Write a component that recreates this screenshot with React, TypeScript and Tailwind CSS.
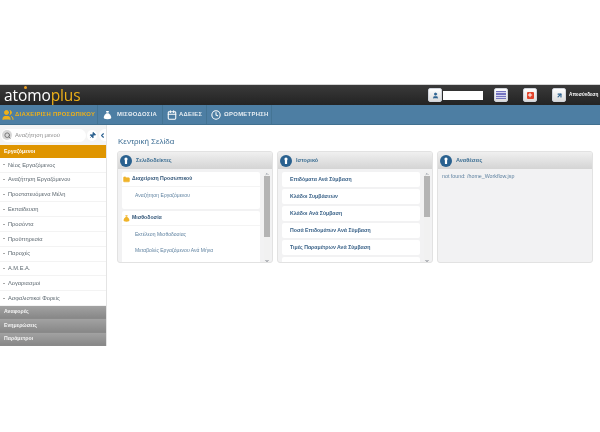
import { Search, Pin, ChevronLeft, ChevronUp, ChevronDown, Calendar, Clock, User, ArrowUpRight, Folder, Users, Plus } from "lucide-react";

const menuItems = [
  "Νέος Εργαζόμενος",
  "Αναζήτηση Εργαζόμενου",
  "Προστατευόμενα Μέλη",
  "Εκπαίδευση",
  "Προσόντα",
  "Προϋπηρεσία",
  "Παροχές",
  "Α.Μ.Ε.Α.",
  "Λογαριασμοί",
  "Ασφαλιστικοί Φορείς",
];

const historyItems = [
  "Επιδόματα Ανά Σύμβαση",
  "Κλάδοι Συμβάσεων",
  "Κλάδοι Ανά Σύμβαση",
  "Ποσά Επιδομάτων Ανά Σύμβαση",
  "Τιμές Παραμέτρων Ανά Σύμβαση",
  "Παράμετροι Ανά Σύμβαση",
];

function MoneyBag({ className }: { className: string }) {
  return (
    <svg viewBox="0 0 12 12" className={className} fill="currentColor">
      <path d="M4 0.5h4L7.2 3H4.8z" />
      <path d="M4.6 3.6h2.8C9.6 5.2 11 7.4 11 9.2c0 1.5-1.2 2.3-5 2.3s-5-.8-5-2.3c0-1.8 1.4-4 3.6-5.6z" />
    </svg>
  );
}

function HeaderButton({ children }: { children: React.ReactNode }) {
  return (
    <div className="flex h-[14px] w-[14px] items-center justify-center rounded-[2px] border border-gray-300 bg-gradient-to-b from-white to-[#dcdcdc]">
      {children}
    </div>
  );
}

function NavItem({ icon, label, active, className }: { icon: React.ReactNode; label: string; active?: boolean; className: string }) {
  return (
    <div className={`flex h-full items-center border-r border-[#447494] ${className}`}>
      {icon}
      <span className={`whitespace-nowrap text-[5.9px] font-bold tracking-[0.3px] ${active ? "text-[#eeb019]" : "text-[#e8eef3]"}`}>{label}</span>
    </div>
  );
}

function Scrollbar({ thumb }: { thumb: string }) {
  return (
    <div className="flex w-[6px] shrink-0 flex-col items-center bg-[#f1f1f1]">
      <ChevronUp className="h-[4px] w-[6px] shrink-0 text-gray-500" strokeWidth={4} />
      <div className={`w-[6px] bg-[#b4b4b4] ${thumb}`} />
      <div className="flex-1" />
      <ChevronDown className="h-[4px] w-[6px] shrink-0 text-gray-800" strokeWidth={4} />
    </div>
  );
}

function Panel({ title, children }: { title: string; children: React.ReactNode }) {
  return (
    <div className="flex h-[112px] w-[156px] flex-col overflow-hidden rounded-[3px] border border-[#e2e2e2] bg-[#f2f2f3]">
      <div className="flex h-[17px] shrink-0 items-center gap-[4px] bg-gradient-to-b from-[#f0f0f0] to-[#d4d4d4] pl-[2px]">
        <svg viewBox="0 0 12 12" className="h-[12px] w-[12px] shrink-0">
          <circle cx="6" cy="6" r="6" fill="#2a618f" />
          <circle cx="6" cy="4" r="1.6" fill="#fff" />
          <rect x="4.9" y="4.5" width="2.2" height="4.5" rx="0.6" fill="#fff" />
        </svg>
        <span className="text-[5.5px] font-bold text-[#3d6f93]">{title}</span>
      </div>
      {children}
    </div>
  );
}

function BookmarkGroup({ icon, title, links, height }: { icon: React.ReactNode; title: string; links: string[]; height: string }) {
  return (
    <div className={`shrink-0 overflow-hidden rounded-[2px] bg-white ${height}`}>
      <div className="flex h-[15px] items-center gap-[2px] border-b border-[#f4f4f4] pl-[1px]">
        {icon}
        <span className="text-[5.2px] font-bold text-[#35587a]">{title}</span>
      </div>
      <div className="flex flex-col pl-[13px]">
        {links.map((link) => (
          <div key={link} className="flex h-[16.5px] items-center text-[5px] text-[#5f82a0]">
            {link}
          </div>
        ))}
      </div>
    </div>
  );
}

export default function App() {
  return (
    <div className="flex h-[432px] w-[600px] flex-col overflow-hidden bg-white font-['Liberation_Sans',Arial,sans-serif] blur-[0.3px]">
      <div className="h-[85px] shrink-0 border-b border-[#d4d4d4]" />

      {/* top bar */}
      <header className="flex h-[20px] shrink-0 items-center justify-between bg-gradient-to-b from-[#3a3a3a] to-[#232323]">
        <div className="pl-[4px] pt-[1px] font-['Open_Sans',sans-serif] text-[15.5px] leading-none tracking-[-0.1px]">
          <span className="text-white">at</span>
          <span className="relative text-white">
            o
            <span className="absolute right-[0px] top-[2px] h-[3px] w-[3px] rounded-full bg-[#f0a020]" />
          </span>
          <span className="text-white">mo</span>
          <span className="text-[#eeb019]">plus</span>
        </div>
        <div className="flex items-center">
          <HeaderButton>
            <User className="h-[7px] w-[7px] fill-[#2d6290] text-[#2d6290]" />
          </HeaderButton>
          <div className="ml-[1px] h-[9px] w-[40px] bg-white" />
          <div className="ml-[11px]">
            <HeaderButton>
              <div className="flex h-[8px] w-[10px] flex-col justify-between bg-[#7474c0] py-[1px]">
                <div className="h-px bg-[#d6d6f0]" />
                <div className="h-px bg-[#d6d6f0]" />
                <div className="h-px bg-[#d6d6f0]" />
              </div>
            </HeaderButton>
          </div>
          <div className="ml-[15px]">
            <HeaderButton>
              <div className="flex h-[7px] w-[7px] items-center justify-center rounded-[1px] bg-[#e2432a]">
                <Plus className="h-[6px] w-[6px] text-white" strokeWidth={4} />
              </div>
            </HeaderButton>
          </div>
          <div className="ml-[15px]">
            <HeaderButton>
              <ArrowUpRight className="h-[7px] w-[7px] text-[#2d6290]" strokeWidth={4} />
            </HeaderButton>
          </div>
          <span className="ml-[3px] mr-[2px] w-[29px] whitespace-nowrap text-[4.7px] font-bold text-white">Αποσύνδεση</span>
        </div>
      </header>

      {/* main nav */}
      <nav className="flex h-[20px] shrink-0 items-center border-b border-[#41708f] bg-[#4d7ea3]">
        <NavItem
          className="w-[98px] pl-[2px]"
          active
          label="ΔΙΑΧΕΙΡΙΣΗ ΠΡΟΣΩΠΙΚΟΥ"
          icon={<Users className="mr-[1px] h-[12px] w-[12px] shrink-0 fill-[#eeb019] text-[#eeb019]" />}
        />
        <NavItem
          className="w-[65px] pl-[5px]"
          label="ΜΙΣΘΟΔΟΣΙΑ"
          icon={<MoneyBag className="mr-[5px] h-[10px] w-[9px] shrink-0 text-white" />}
        />
        <NavItem
          className="w-[44px] pl-[4px]"
          label="ΑΔΕΙΕΣ"
          icon={<Calendar className="mr-[2px] h-[10px] w-[10px] shrink-0 text-white" strokeWidth={2.5} />}
        />
        <NavItem
          className="w-[65px] pl-[4px]"
          label="ΩΡΟΜΕΤΡΗΣΗ"
          icon={<Clock className="mr-[3px] h-[10px] w-[10px] shrink-0 text-white" strokeWidth={2.5} />}
        />
      </nav>

      <div className="flex flex-1 items-start">
        {/* sidebar */}
        <aside className="h-[221px] w-[107px] shrink-0 border-r border-[#e4e4e4]">
          <div className="flex h-[20px] items-center bg-[#f4f4f4] pl-[1px]">
            <div className="flex h-[13px] w-[85px] items-center gap-[3px] rounded-full bg-white pl-[1px]">
              <div className="flex h-[10px] w-[10px] items-center justify-center rounded-full bg-[#d8d8d8]">
                <Search className="h-[7px] w-[7px] text-[#6f6f6f]" strokeWidth={3} />
              </div>
              <span className="text-[5.8px] text-[#8e8e8e]">Αναζήτηση μενού</span>
            </div>
            <div className="ml-[1px] flex h-[11px] w-[10px] items-center justify-center rounded-full bg-white">
              <Pin className="h-[7px] w-[7px] rotate-45 fill-[#2d6290] text-[#2d6290]" />
            </div>
            <div className="ml-auto flex h-[12px] w-[7px] items-center justify-center rounded-l-full bg-white">
              <ChevronLeft className="h-[7px] w-[7px] text-[#2d6290]" strokeWidth={4} />
            </div>
          </div>
          <div className="flex h-[13px] items-center bg-[#df9500] pl-[4px] text-[5.2px] font-bold text-white">Εργαζόμενοι</div>
          <div className="h-[148px]">
            {menuItems.map((item) => (
              <div key={item} className="flex h-[14.8px] items-center gap-[3px] border-b border-[#f3f3f3] pl-[3px] text-[5.7px] text-[#5d6870]">
                <span className="h-px w-[2px] bg-[#a8a8a8]" />
                <span className="whitespace-nowrap">{item}</span>
              </div>
            ))}
          </div>
          {["Αναφορές", "Ενημερώσεις", "Παράμετροι"].map((item) => (
            <div
              key={item}
              className="flex h-[13.4px] items-center border-b border-[#8a8a8a] bg-gradient-to-b from-[#a2a2a2] to-[#888888] pl-[4px] text-[5.2px] font-bold text-[#f4f4f4]"
            >
              {item}
            </div>
          ))}
        </aside>

        {/* content */}
        <main className="flex-1 pl-[10px]">
          <h1 className="ml-[1px] flex h-[26px] items-end pb-[3px] text-[8px] text-[#3f6f95]">Κεντρική Σελίδα</h1>
          <div className="flex gap-[4px]">
            <Panel title="Σελιδοδείκτες">
              <div className="flex h-[94px] gap-[4px] pl-[4px] pr-[1px] pt-[3px]">
                <div className="flex w-[138px] flex-col gap-[2px] overflow-hidden">
                  <BookmarkGroup
                    height="h-[37px]"
                    title="Διαχείριση Προσωπικού"
                    links={["Αναζήτηση Εργαζόμενου"]}
                    icon={<Folder className="h-[7px] w-[7px] shrink-0 fill-[#f0b429] text-[#f0b429]" />}
                  />
                  <BookmarkGroup
                    height="h-[60px]"
                    title="Μισθοδοσία"
                    links={["Εκτέλεση Μισθοδοσίας", "Μεταβολές Εργαζόμενου Ανά Μήνα"]}
                    icon={<MoneyBag className="h-[7px] w-[7px] shrink-0 text-[#f0b429]" />}
                  />
                </div>
                <Scrollbar thumb="h-[61px]" />
              </div>
            </Panel>
            <Panel title="Ιστορικό">
              <div className="flex h-[94px] gap-[4px] pl-[4px] pr-[1px] pt-[3px]">
                <div className="flex w-[138px] flex-col gap-[2px] overflow-hidden">
                  {historyItems.map((item) => (
                    <div key={item} className="flex h-[15px] shrink-0 items-center rounded-[2px] bg-white pl-[8px] text-[5.2px] font-bold text-[#3a6288]">
                      {item}
                    </div>
                  ))}
                </div>
                <Scrollbar thumb="h-[41px]" />
              </div>
            </Panel>
            <Panel title="Αναθέσεις">
              <p className="pl-[4px] pt-[4px] text-[5.3px] text-[#5f82a0]">not found: /home_Workflow.jsp</p>
            </Panel>
          </div>
        </main>
      </div>
    </div>
  );
}
